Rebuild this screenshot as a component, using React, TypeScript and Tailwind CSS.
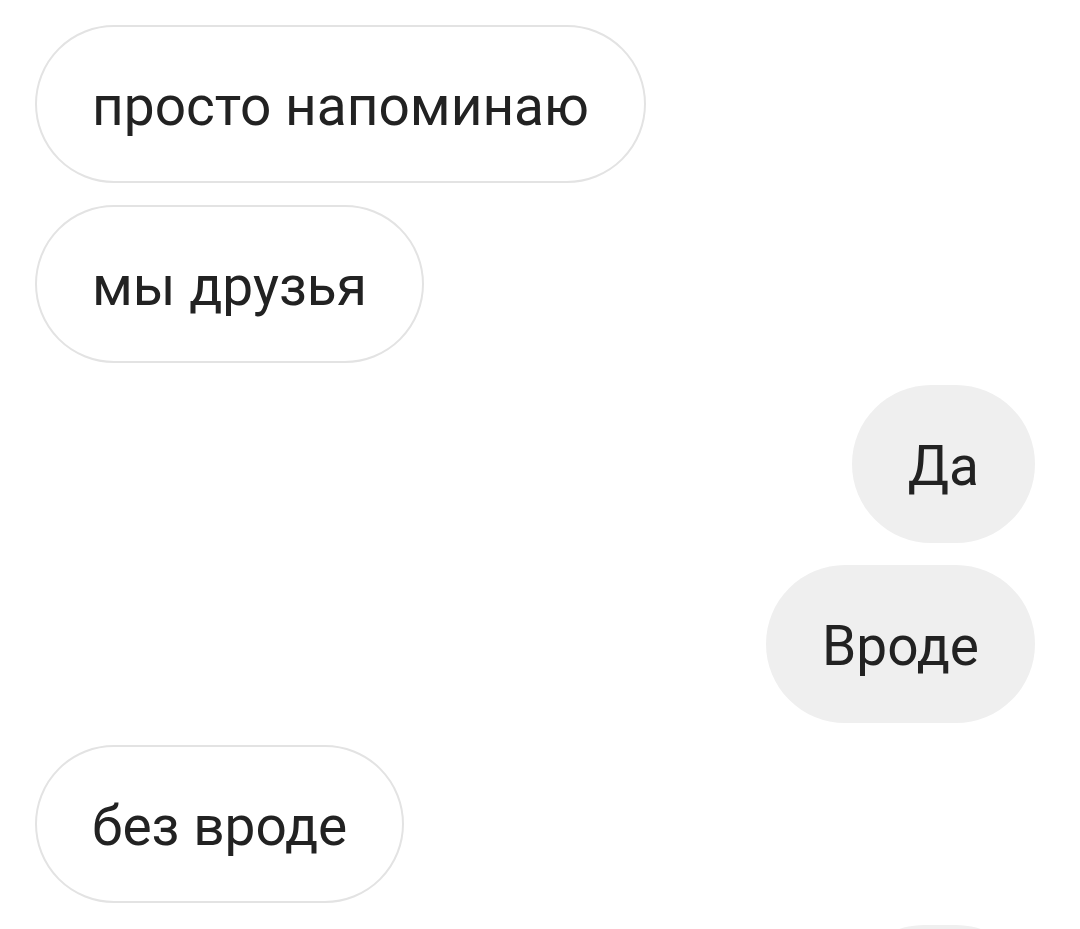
const messages: { text: string; mine: boolean }[] = [
  { text: "просто напоминаю", mine: false },
  { text: "мы друзья", mine: false },
  { text: "Да", mine: true },
  { text: "Вроде", mine: true },
  { text: "без вроде", mine: false },
];

function Bubble({ text, mine }: { text: string; mine: boolean }) {
  return (
    <div className={`flex ${mine ? "justify-end" : "justify-start"}`}>
      <div
        className={
          mine
            ? "flex h-[158px] items-center rounded-full bg-[#efefef] px-[56px] text-[55px] text-[#222]"
            : "flex h-[158px] items-center rounded-full border-2 border-[#e3e3e3] bg-white px-[55px] text-[55px] text-[#222]"
        }
      >
        <span className="pt-[4px] leading-none">{text}</span>
      </div>
    </div>
  );
}

export default function App() {
  return (
    <div className="h-[929px] overflow-hidden bg-white font-['Roboto',sans-serif]">
      <div className="flex flex-col gap-[22px] pl-[35px] pr-[45px] pt-[25px]">
        {messages.map((m, i) => (
          <Bubble key={i} text={m.text} mine={m.mine} />
        ))}
        {/* next own message, only its top edge is on screen */}
        <div className="flex justify-end">
          <div className="h-[158px] w-[190px] rounded-full bg-[#efefef]" />
        </div>
      </div>
    </div>
  );
}
